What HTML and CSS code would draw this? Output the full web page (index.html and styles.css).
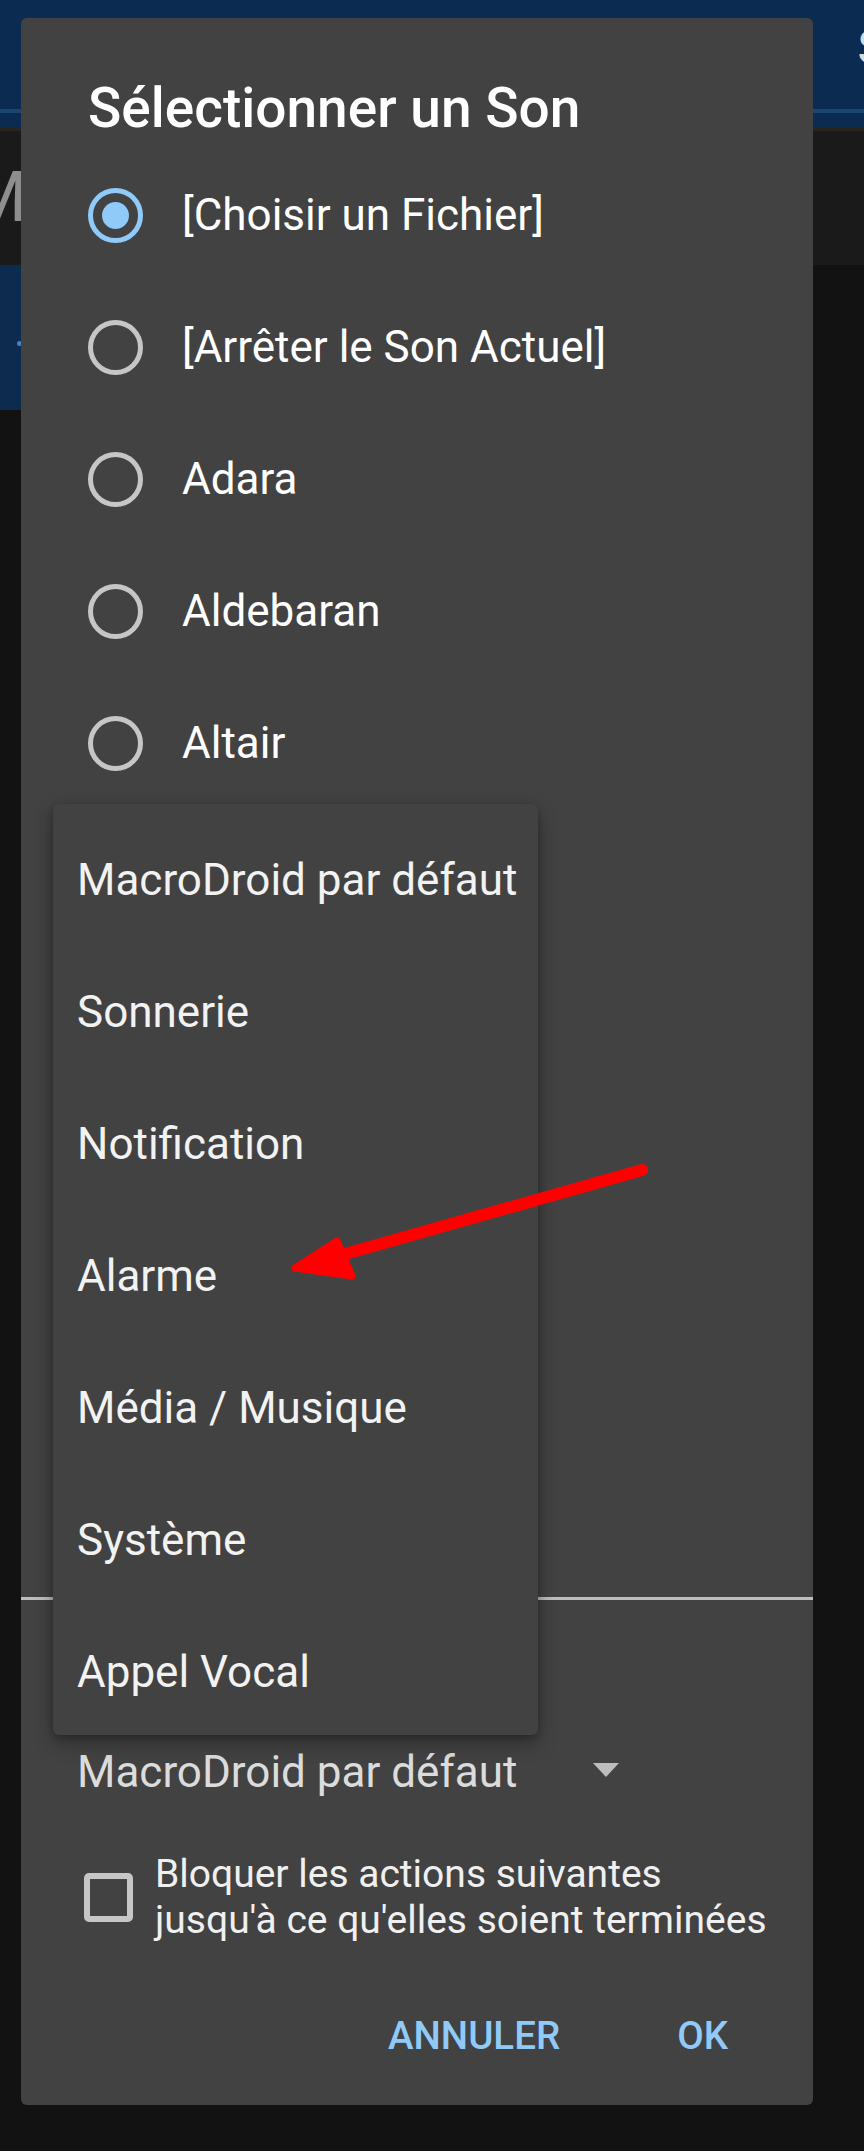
FILE: index.html
```html
<!DOCTYPE html>
<html lang="fr">
<head>
<meta charset="utf-8">
<title>Sélectionner un Son</title>
<link rel="stylesheet" href="styles.css">
</head>
<body>
<div class="app">
  <div class="appbar">
    <span class="appbar-s">S</span>
    <div class="appbar-line"></div>
  </div>
  <div class="band"><span class="band-m">M</span></div>
  <div class="card"><span class="card-dot"></span></div>
</div>

<div class="dialog">
  <div class="title">Sélectionner un Son</div>
  <div class="radio-list">
    <div class="radio-row"><span class="radio checked"></span><span class="radio-label">[Choisir un Fichier]</span></div>
    <div class="radio-row"><span class="radio"></span><span class="radio-label">[Arrêter le Son Actuel]</span></div>
    <div class="radio-row"><span class="radio"></span><span class="radio-label">Adara</span></div>
    <div class="radio-row"><span class="radio"></span><span class="radio-label">Aldebaran</span></div>
    <div class="radio-row"><span class="radio"></span><span class="radio-label">Altair</span></div>
  </div>
  <div class="spinner">
    <span class="spinner-text">MacroDroid par défaut</span>
    <span class="spinner-arrow"></span>
  </div>
  <div class="check-row">
    <span class="checkbox"></span>
    <span class="check-label">Bloquer les actions suivantes<br>jusqu'à ce qu'elles soient terminées</span>
  </div>
  <div class="buttons">
    <span class="btn">ANNULER</span>
    <span class="btn">OK</span>
  </div>

  <div class="popup">
    <div class="popup-item">MacroDroid par défaut</div>
    <div class="popup-item">Sonnerie</div>
    <div class="popup-item">Notification</div>
    <div class="popup-item">Alarme</div>
    <div class="popup-item">Média / Musique</div>
    <div class="popup-item">Système</div>
    <div class="popup-item">Appel Vocal</div>
  </div>
</div>

<svg class="arrow" width="380" height="140" viewBox="0 0 380 140">
  <line x1="362" y1="20" x2="58" y2="106" stroke="#ff0000" stroke-width="12" stroke-linecap="round"/>
  <polygon points="15,118 57,91 72,126" fill="#ff0000" stroke="#ff0000" stroke-width="7" stroke-linejoin="round"/>
</svg>
</body>
</html>
```

FILE: styles.css
```css
* { box-sizing: border-box; }

html, body {
  margin: 0;
  padding: 0;
}

body {
  width: 864px;
  height: 2151px;
  overflow: hidden;
  background: #121212;
  font-family: Roboto, "Noto Sans", "Liberation Sans", sans-serif;
  position: relative;
}

/* background app (under the scrim) */
.app {
  display: flex;
  flex-direction: column;
}

.appbar {
  height: 128px;
  background: #0b2c50;
  display: flex;
  flex-direction: column;
  overflow: hidden;
}

.appbar-s {
  align-self: flex-end;
  margin-right: -22px;
  margin-top: 20px;
  height: 82px;
  font-size: 48px;
  line-height: 56px;
  color: #d8d8d8;
}

.appbar-line {
  height: 4px;
  margin-top: 7px;
  background: #1b4670;
}

.band {
  height: 137px;
  background: #1a1a1a;
  border-top: 3px solid #2a241f;
  overflow: hidden;
  display: flex;
  align-items: center;
}

.band-m {
  margin-left: -34px;
  font-size: 70px;
  line-height: 70px;
  color: #8e8e8e;
  margin-top: -2px;
}

.card {
  width: 790px;
  height: 145px;
  background: #0c2b4e;
  display: flex;
  align-items: center;
}

.card-dot {
  width: 5px;
  height: 5px;
  border-radius: 50%;
  background: #4d80c0;
  margin-left: 17px;
  margin-top: 11px;
}

/* dialog */
.dialog {
  position: absolute;
  left: 21px;
  top: 18px;
  width: 792px;
  height: 2087px;
  background: #424242;
  border-radius: 6px;
  display: flex;
  flex-direction: column;
}

.title {
  padding: 58px 0 0 67px;
  font-size: 55px;
  line-height: 64px;
  font-weight: 500;
  color: #ffffff;
  margin-bottom: 9px;
}

.radio-list {
  height: 1451px;
  border-bottom: 3px solid #bdbdbd;
  display: flex;
  flex-direction: column;
}

.radio-row {
  height: 132px;
  display: flex;
  align-items: center;
  padding-left: 67px;
  gap: 39px;
  flex-shrink: 0;
}

.radio {
  width: 55px;
  height: 55px;
  border: 5.5px solid #c6c6c6;
  border-radius: 50%;
  display: flex;
  align-items: center;
  justify-content: center;
  flex-shrink: 0;
}

.radio.checked {
  border-color: #90caf9;
}

.radio.checked::after {
  content: "";
  width: 27px;
  height: 27px;
  border-radius: 50%;
  background: #90caf9;
}

.radio-label {
  font-size: 44px;
  line-height: 52px;
  color: #ffffff;
}

.spinner {
  margin-top: 146px;
  height: 52px;
  display: flex;
  align-items: center;
  padding-left: 56px;
}

.spinner-text {
  font-size: 44px;
  line-height: 52px;
  color: #dcdcdc;
}

.spinner-arrow {
  margin-left: 76px;
  margin-top: -4px;
  width: 0;
  height: 0;
  border-left: 13px solid transparent;
  border-right: 13px solid transparent;
  border-top: 14px solid #bdbdbd;
}

.check-row {
  margin-top: 53px;
  display: flex;
  align-items: center;
  padding-left: 63px;
  gap: 22px;
}

.checkbox {
  width: 49px;
  height: 49px;
  border: 6px solid #c6c6c6;
  border-radius: 5px;
  flex-shrink: 0;
}

.check-label {
  font-size: 39px;
  line-height: 46px;
  color: #f0f0f0;
}

.buttons {
  margin-top: 70px;
  display: flex;
  justify-content: flex-end;
  padding-right: 85px;
  gap: 117px;
}

.btn {
  font-size: 38.5px;
  line-height: 46px;
  font-weight: 500;
  color: #90caf9;
}

/* dropdown popup over the dialog */
.popup {
  position: absolute;
  left: 32px;
  top: 786px;
  width: 485px;
  height: 931px;
  padding-top: 10px;
  background: #424242;
  border-radius: 6px;
  box-shadow: 0 8px 20px rgba(0, 0, 0, 0.32), 0 2px 6px rgba(0, 0, 0, 0.22);
  display: flex;
  flex-direction: column;
  overflow: hidden;
}

.popup-item {
  height: 132px;
  flex-shrink: 0;
  display: flex;
  align-items: center;
  padding-left: 24px;
  font-size: 44px;
  line-height: 52px;
  color: #f2f2f2;
}

/* annotation arrow */
.arrow {
  position: absolute;
  left: 280px;
  top: 1150px;
}
```
